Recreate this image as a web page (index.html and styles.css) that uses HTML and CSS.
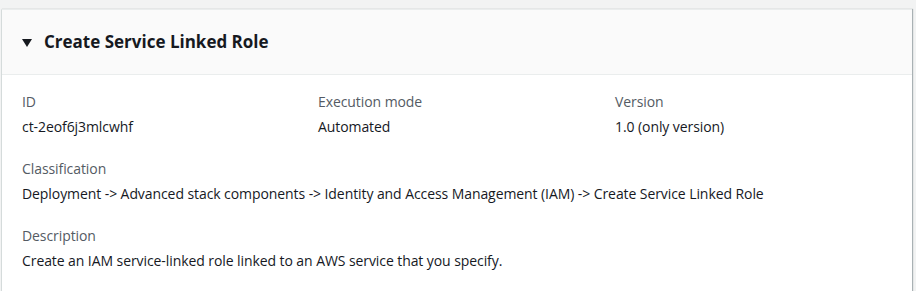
FILE: index.html
```html
<!DOCTYPE html>
<html>
<head>
<meta charset="utf-8">
<link rel="stylesheet" href="styles.css">
</head>
<body>
<div class="card">
  <div class="card-header">
    <svg class="caret" width="10" height="8" viewBox="0 0 10 8"><polygon points="0,0 10,0 5,8" fill="#16191f"/></svg>
    <h2 class="title">Create Service Linked Role</h2>
  </div>
  <div class="card-body">
    <div class="grid">
      <div class="field">
        <div class="label">ID</div>
        <div class="value">ct-2eof6j3mlcwhf</div>
      </div>
      <div class="field">
        <div class="label">Execution mode</div>
        <div class="value">Automated</div>
      </div>
      <div class="field">
        <div class="label">Version</div>
        <div class="value">1.0 (only version)</div>
      </div>
    </div>
    <div class="field">
      <div class="label">Classification</div>
      <div class="value">Deployment -&gt; Advanced stack components -&gt; Identity and Access Management (IAM) -&gt; Create Service Linked Role</div>
    </div>
    <div class="field">
      <div class="label">Description</div>
      <div class="value">Create an IAM service-linked role linked to an AWS service that you specify.</div>
    </div>
  </div>
</div>
</body>
</html>
```
FILE: styles.css
```css
html, body {
  margin: 0;
  padding: 0;
  background: #f2f3f3;
}
body {
  padding: 9px 4px 0 1px;
  font-family: "Open Sans", "Noto Sans", sans-serif;
  color: #16191f;
}
.card {
  background: #ffffff;
  border-top: 1px solid #eaeded;
  border-left: 1px solid #d5dbdb;
  box-shadow: 1px 0 1px 0 rgba(0,28,36,0.3);
  min-height: 290px;
}
.card-header {
  display: flex;
  align-items: center;
  height: 64px;
  padding-left: 20px;
  background: #fafafa;
  border-bottom: 1px solid #eaeded;
}
.caret {
  margin-right: 12px;
  margin-top: 1px;
}
.title {
  margin: 0;
  font-size: 17px;
  font-weight: 700;
  line-height: 22px;
}
.card-body {
  padding: 16px 0 0 20px;
}
.grid {
  display: grid;
  grid-template-columns: 296px 297px 1fr;
}
.field {
  margin-bottom: 20px;
}
.label {
  font-size: 14px;
  line-height: 22px;
  letter-spacing: -0.08px;
  color: #545b64;
  margin-bottom: 3px;
}
.value {
  font-size: 14px;
  line-height: 22px;
  letter-spacing: -0.08px;
  color: #16191f;
}
```
